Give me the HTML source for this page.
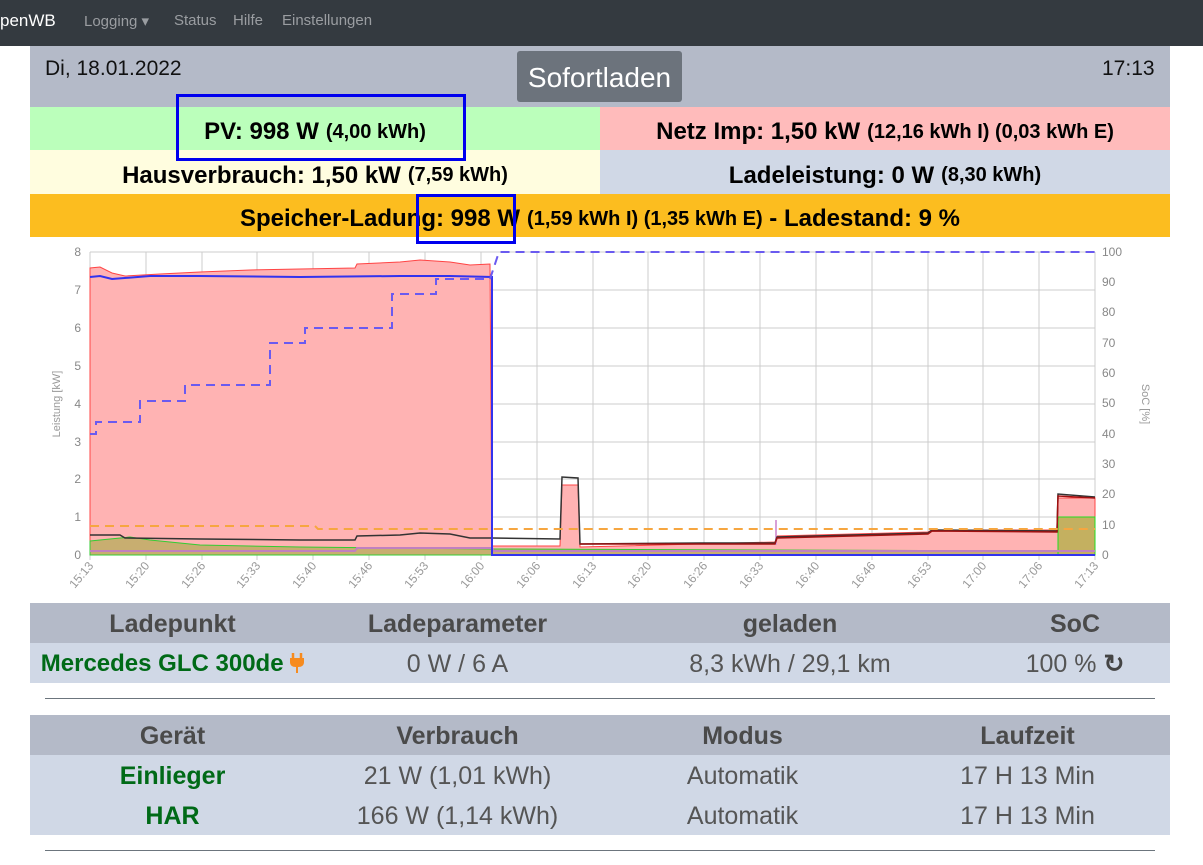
<!DOCTYPE html>
<html><head><meta charset="utf-8">
<style>
*{margin:0;padding:0;box-sizing:border-box}
body{width:1203px;height:865px;background:#fff;font-family:"Liberation Sans",sans-serif;overflow:hidden;position:relative}
.nav{position:absolute;left:0;top:0;width:1203px;height:46px;background:#343a40;color:#9a9da1;font-size:15px}
.nav span{position:absolute;top:12px}
.abs{position:absolute}
.row{position:absolute;display:flex;align-items:center;justify-content:center;font-weight:bold;font-size:24px;color:#000;white-space:nowrap;padding-top:7px}
.row small{font-size:20px;margin-left:7px}
.hdr{background:#b4bac8}
.tb{position:absolute;left:30px;width:1140px;display:flex;align-items:center;font-size:25px;color:#555;padding-top:2px}
.tb div{text-align:center;white-space:nowrap}
.th{font-weight:bold;background:#b4bac8;color:#4a4a4a}
.tr{background:#d0d8e6}
.g{color:#006a17;font-weight:bold}
.hr{position:absolute;left:45px;width:1110px;height:1px;background:#6c757d}
</style></head><body>
<div class="nav"><span style="left:0;color:#fff;font-size:17px;top:11px">penWB</span><span style="left:84px">Logging &#9662;</span><span style="left:174px">Status</span><span style="left:233px">Hilfe</span><span style="left:282px">Einstellungen</span></div>
<div class="abs hdr" style="left:30px;top:46px;width:1140px;height:61px"></div>
<div class="abs" style="left:45px;top:57px;font-size:21px;color:#111">Di, 18.01.2022</div>
<div class="abs" style="left:1102px;top:57px;font-size:21px;color:#111">17:13</div>
<div class="abs" style="left:517px;top:51px;width:165px;height:51px;background:#6c737c;border-radius:3px;color:#fff;font-size:28px;text-align:center;line-height:54px">Sofortladen</div>
<div class="row" style="left:30px;top:107px;width:570px;height:43px;background:#bbffbb">PV: 998 W<small>(4,00 kWh)</small></div>
<div class="row" style="left:600px;top:107px;width:570px;height:43px;background:#ffbbbb">Netz Imp: 1,50 kW<small>(12,16 kWh I) (0,03 kWh E)</small></div>
<div class="row" style="left:30px;top:150px;width:570px;height:44px;background:#fffddf">Hausverbrauch: 1,50 kW<small>(7,59 kWh)</small></div>
<div class="row" style="left:600px;top:150px;width:570px;height:44px;background:#d0d8e6">Ladeleistung: 0 W<small>(8,30 kWh)</small></div>
<div class="row" style="left:30px;top:194px;width:1140px;height:43px;background:#fcbd1f">Speicher-Ladung: 998 W<small>(1,59 kWh I) (1,35 kWh E)</small>&nbsp;- Ladestand: 9 %</div>
<div class="abs" style="left:176px;top:94px;width:290px;height:67px;border:3px solid #0000ee"></div>
<div class="abs" style="left:416px;top:194px;width:100px;height:50px;border:3px solid #0000ee"></div>

<svg class="abs" style="left:0;top:237px" width="1203" height="366" viewBox="0 237 1203 366">
<g stroke="#ccc" stroke-width="1">
<line x1="90" y1="252" x2="1095" y2="252"/><line x1="90" y1="290" x2="1095" y2="290"/><line x1="90" y1="328" x2="1095" y2="328"/><line x1="90" y1="366" x2="1095" y2="366"/><line x1="90" y1="404" x2="1095" y2="404"/><line x1="90" y1="442" x2="1095" y2="442"/><line x1="90" y1="479" x2="1095" y2="479"/><line x1="90" y1="517" x2="1095" y2="517"/><line x1="90" y1="555" x2="1095" y2="555"/>
</g>
<g stroke="#ccc">
<line x1="90" y1="252" x2="90" y2="560"/><line x1="146" y1="252" x2="146" y2="560"/><line x1="202" y1="252" x2="202" y2="560"/><line x1="257" y1="252" x2="257" y2="560"/><line x1="313" y1="252" x2="313" y2="560"/><line x1="369" y1="252" x2="369" y2="560"/><line x1="425" y1="252" x2="425" y2="560"/><line x1="481" y1="252" x2="481" y2="560"/><line x1="537" y1="252" x2="537" y2="560"/><line x1="593" y1="252" x2="593" y2="560"/><line x1="648" y1="252" x2="648" y2="560"/><line x1="704" y1="252" x2="704" y2="560"/><line x1="760" y1="252" x2="760" y2="560"/><line x1="816" y1="252" x2="816" y2="560"/><line x1="872" y1="252" x2="872" y2="560"/><line x1="928" y1="252" x2="928" y2="560"/><line x1="983" y1="252" x2="983" y2="560"/><line x1="1039" y1="252" x2="1039" y2="560"/><line x1="1095" y1="252" x2="1095" y2="560"/>
</g>
<path d="M90,555 L90,268 L100,267 L112,273 L125,276 L160,274 L200,272 L250,270 L300,269 L355,268 L357,264 L400,262 L420,260 L450,262 L470,265 L490,264 L492,555 Z" fill="#ffb3b3" stroke="#f44" stroke-width="1"/>
<path d="M492,555 L492,546 L560,546 L562,485 L578,485 L580,547 L775,542 L777,536 L928,532 L932,530 L1057,530 L1058,498 L1095,498 L1095,555 Z" fill="#ffb3b3" stroke="#f44" stroke-width="1"/>
<path d="M90,541 L110,539 L130,537 L150,540 L200,545 L300,547 L492,549 L1057,551 L1095,551 L1095,555 L90,555 Z" fill="#c8ae70" stroke="#3c3" stroke-width="1"/>
<path d="M1058,555 L1058,517 L1095,517 L1095,555 Z" fill="#c4b060" stroke="#2d2" stroke-width="1"/>
<path d="M90,551 L355,551 L357,548 L492,548 L494,551 L1095,551" fill="none" stroke="#c080c0" stroke-width="2"/>
<path d="M776,520 L776,545" stroke="#d8a0d8" stroke-width="2"/>
<path d="M90,535 L120,535 L125,538 L200,539 L300,540 L355,540 L357,536 L400,535 L420,533 L450,534 L470,538 L492,538 L560,539 L562,477 L578,478 L580,544 L700,543 L775,543 L777,537 L928,533 L932,530 L1057,531 L1058,494 L1095,497" fill="none" stroke="#333" stroke-width="1.5"/>
<path d="M580,544 L775,544 L777,538 L928,534 L932,531 L1057,532 L1058,496 L1095,498" fill="none" stroke="#a01010" stroke-width="1.5"/>
<path d="M90,277 L100,276 L112,279 L150,276 L200,276 L300,277 L400,276 L450,276 L492,277 L492,555 L1095,555" fill="none" stroke="#33e" stroke-width="2"/>
<path d="M90,526 L315,526 L318,529 L1095,529" fill="none" stroke="#f6a640" stroke-width="2" stroke-dasharray="9,6"/>
<path d="M90,434 L96,434 L96,422 L140,422 L140,401 L185,401 L185,385 L270,385 L270,343 L305,343 L305,328 L392,328 L392,294 L436,294 L436,279 L490,279 L499,252 L1095,252" fill="none" stroke="#6a5af0" stroke-width="2" stroke-dasharray="9,6"/>
<g font-size="12" fill="#888" text-anchor="end">
<text x="81" y="256">8</text><text x="81" y="294">7</text><text x="81" y="332">6</text><text x="81" y="370">5</text><text x="81" y="408">4</text><text x="81" y="446">3</text><text x="81" y="483">2</text><text x="81" y="521">1</text><text x="81" y="559">0</text>
</g>
<g font-size="12" fill="#888">
<text x="1102" y="256">100</text><text x="1102" y="286">90</text><text x="1102" y="316">80</text><text x="1102" y="347">70</text><text x="1102" y="377">60</text><text x="1102" y="407">50</text><text x="1102" y="438">40</text><text x="1102" y="468">30</text><text x="1102" y="498">20</text><text x="1102" y="529">10</text><text x="1102" y="559">0</text>
</g>
<text x="60" y="404" font-size="11" fill="#999" transform="rotate(-90 60 404)" text-anchor="middle">Leistung [kW]</text>
<text x="1142" y="404" font-size="11" fill="#999" transform="rotate(90 1142 404)" text-anchor="middle">SoC [%]</text>
<g font-size="12" fill="#999" text-anchor="end">
<text transform="translate(94,566) rotate(-50)">15:13</text><text transform="translate(150,566) rotate(-50)">15:20</text><text transform="translate(206,566) rotate(-50)">15:26</text><text transform="translate(261,566) rotate(-50)">15:33</text><text transform="translate(317,566) rotate(-50)">15:40</text><text transform="translate(373,566) rotate(-50)">15:46</text><text transform="translate(429,566) rotate(-50)">15:53</text><text transform="translate(485,566) rotate(-50)">16:00</text><text transform="translate(541,566) rotate(-50)">16:06</text><text transform="translate(597,566) rotate(-50)">16:13</text><text transform="translate(652,566) rotate(-50)">16:20</text><text transform="translate(708,566) rotate(-50)">16:26</text><text transform="translate(764,566) rotate(-50)">16:33</text><text transform="translate(820,566) rotate(-50)">16:40</text><text transform="translate(876,566) rotate(-50)">16:46</text><text transform="translate(932,566) rotate(-50)">16:53</text><text transform="translate(987,566) rotate(-50)">17:00</text><text transform="translate(1043,566) rotate(-50)">17:06</text><text transform="translate(1099,566) rotate(-50)">17:13</text>
</g>
</svg>

<div class="tb th" style="top:603px;height:40px"><div style="width:285px">Ladepunkt</div><div style="width:285px">Ladeparameter</div><div style="width:380px">geladen</div><div style="width:190px">SoC</div></div>
<div class="tb tr" style="top:643px;height:40px"><div style="width:285px;font-size:24px" class="g">Mercedes GLC 300de <svg width="14" height="20" viewBox="0 0 14 20" style="vertical-align:-2px"><path d="M3,0 V5 M11,0 V5" stroke="#f68b1f" stroke-width="2.5"/><path d="M0,5 H14 V9 Q14,14 8,14 V20 H6 V14 Q0,14 0,9 Z" fill="#f68b1f"/></svg></div><div style="width:285px">0 W / 6 A</div><div style="width:380px">8,3 kWh / 29,1 km</div><div style="width:190px">100 % <b style="color:#444">&#8635;</b></div></div>
<div class="hr" style="top:698px"></div>
<div class="tb th" style="top:715px;height:40px"><div style="width:285px">Gerät</div><div style="width:285px">Verbrauch</div><div style="width:285px">Modus</div><div style="width:285px">Laufzeit</div></div>
<div class="tb tr" style="top:755px;height:40px"><div style="width:285px" class="g">Einlieger</div><div style="width:285px">21 W (1,01 kWh)</div><div style="width:285px">Automatik</div><div style="width:285px">17 H 13 Min</div></div>
<div class="tb tr" style="top:795px;height:40px"><div style="width:285px" class="g">HAR</div><div style="width:285px">166 W (1,14 kWh)</div><div style="width:285px">Automatik</div><div style="width:285px">17 H 13 Min</div></div>
<div class="hr" style="top:850px"></div>
</body></html>
